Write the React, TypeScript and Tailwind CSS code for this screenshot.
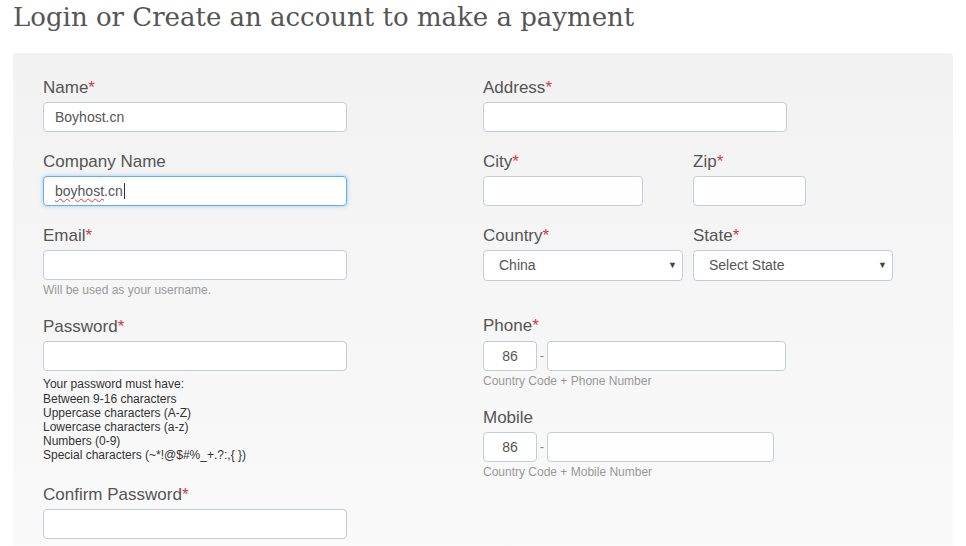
import React from "react";

const Star = () => <span className="text-[#d9363e]">*</span>;

const Label = ({ children, req }: { children: React.ReactNode; req?: boolean }) => (
  <div className="text-[17px] leading-[20px] text-[#555] h-[20px] pt-[1px]">
    {children}
    {req && <Star />}
  </div>
);

const Input = ({ w, value, focus, spell }: { w: string; value?: string; focus?: boolean; spell?: boolean }) => (
  <div
    className={`${w} h-[30px] bg-white rounded-[4px] border flex items-center px-[11px] text-[14px] text-[#555] ${
      focus ? "border-[#66afe9] shadow-[0_0_4px_rgba(102,175,233,0.6)]" : "border-[#c4ccd6]"
    }`}
  >
    {value &&
      (spell ? (
        <span>
          <span className="underline decoration-wavy decoration-[#e33] decoration-[1px] underline-offset-2">
            {value.split(".")[0]}
          </span>
          .{value.split(".")[1]}
        </span>
      ) : (
        <span>{value}</span>
      ))}
    {focus && <span className="w-px h-[16px] bg-[#333] ml-[1px]" />}
  </div>
);

const Select = ({ w, value }: { w: string; value: string }) => (
  <div className={`${w} h-[31px] bg-white rounded-[4px] border border-[#c4ccd6] flex items-center pl-[15px] pr-[5px] text-[14px] text-[#555]`}>
    <span className="flex-1">{value}</span>
    <span className="text-[9px] text-[#444]">▼</span>
  </div>
);

const Help = ({ children }: { children: React.ReactNode }) => (
  <div className="text-[12px] leading-[14px] text-[#999]">{children}</div>
);

const PhoneRow = ({ w }: { w: string }) => (
  <div className="flex items-center h-[30px]">
    <div className="w-[54px] h-[30px] bg-white rounded-[4px] border border-[#c4ccd6] flex items-center justify-center text-[14px] text-[#555]">
      86
    </div>
    <span className="w-[10px] text-center text-[13px] text-[#888]">-</span>
    <div className={`${w} h-[30px] bg-white rounded-[4px] border border-[#c4ccd6]`} />
  </div>
);

export default function App() {
  return (
    <div className="w-[966px] h-[546px] overflow-hidden bg-white px-[13px]" style={{ fontFamily: '"Liberation Sans", Arial, sans-serif' }}>
      <div className="h-[53px] pt-[2px]">
        <h1 className="text-[26px] leading-[31px] text-[#555]" style={{ fontFamily: '"DejaVu Serif", serif' }}>
          Login or Create an account to make a payment
        </h1>
      </div>
      <div className="w-[940px] h-[520px] rounded-[4px] bg-gradient-to-b from-[#f2f2f2] to-[#fafafa] pt-[24px] pl-[30px] flex">
        {/* Left column */}
        <div className="w-[440px] flex flex-col">
          <Label req>Name</Label>
          <div className="mt-[5px]">
            <Input w="w-[304px]" value="Boyhost.cn" />
          </div>
          <div className="mt-[19px]">
            <Label>Company Name</Label>
          </div>
          <div className="mt-[5px]">
            <Input w="w-[304px]" value="boyhost.cn" focus spell />
          </div>
          <div className="mt-[19px]">
            <Label req>Email</Label>
          </div>
          <div className="mt-[5px]">
            <Input w="w-[304px]" />
          </div>
          <div className="mt-[3px]">
            <Help>Will be used as your username.</Help>
          </div>
          <div className="mt-[19px]">
            <Label req>Password</Label>
          </div>
          <div className="mt-[5px]">
            <Input w="w-[304px]" />
          </div>
          <div className="mt-[6px] text-[12px] leading-[14px] text-[#333]">
            <div className="mb-[1px]">Your password must have:</div>
            <div>Between 9-16 characters</div>
            <div>Uppercase characters (A-Z)</div>
            <div>Lowercase characters (a-z)</div>
            <div>Numbers (0-9)</div>
            <div>Special characters (~*!@$#%_+.?:,{"{"} {"}"})</div>
          </div>
          <div className="mt-[22px]">
            <Label req>Confirm Password</Label>
          </div>
          <div className="mt-[5px]">
            <Input w="w-[304px]" />
          </div>
        </div>
        {/* Right column */}
        <div className="flex flex-col">
          <Label req>Address</Label>
          <div className="mt-[5px]">
            <Input w="w-[304px]" />
          </div>
          <div className="mt-[19px] flex gap-[50px]">
            <div>
              <Label req>City</Label>
              <div className="mt-[5px]">
                <Input w="w-[160px]" />
              </div>
            </div>
            <div>
              <Label req>Zip</Label>
              <div className="mt-[5px]">
                <Input w="w-[113px]" />
              </div>
            </div>
          </div>
          <div className="mt-[19px] flex gap-[10px]">
            <div>
              <Label req>Country</Label>
              <div className="mt-[5px]">
                <Select w="w-[200px]" value="China" />
              </div>
            </div>
            <div>
              <Label req>State</Label>
              <div className="mt-[5px]">
                <Select w="w-[200px]" value="Select State" />
              </div>
            </div>
          </div>
          <div className="mt-[34px]">
            <Label req>Phone</Label>
          </div>
          <div className="mt-[6px]">
            <PhoneRow w="w-[239px]" />
          </div>
          <div className="mt-[3px]">
            <Help>Country Code + Phone Number</Help>
          </div>
          <div className="mt-[19px]">
            <Label>Mobile</Label>
          </div>
          <div className="mt-[5px]">
            <PhoneRow w="w-[227px]" />
          </div>
          <div className="mt-[3px]">
            <Help>Country Code + Mobile Number</Help>
          </div>
        </div>
      </div>
    </div>
  );
}
